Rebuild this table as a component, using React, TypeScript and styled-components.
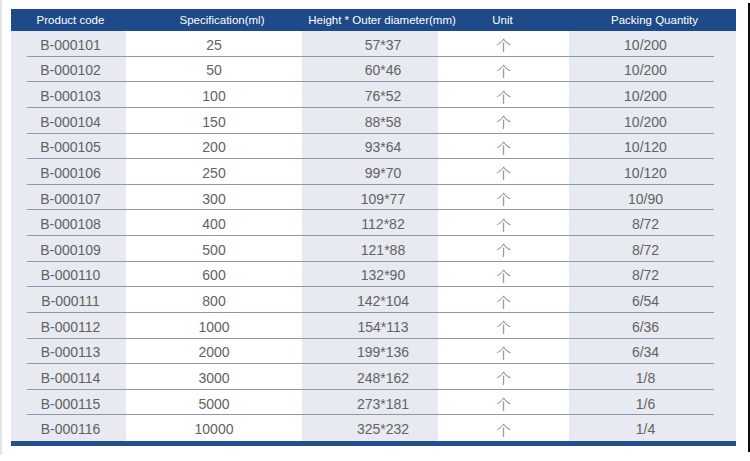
import React, { FunctionComponent } from "react";
import styled, { createGlobalStyle } from "styled-components";

const GlobalStyle = createGlobalStyle`
  html, body {
    margin: 0;
    padding: 0;
    background: #ffffff;
  }
  body {
    font-family: "Liberation Sans", Arial, "Noto Sans CJK SC", sans-serif;
  }
`;

// width, shaded stripe, and how far the text sits off the column centre
const columns = [
  { width: 115, shaded: true, head: 2, body: 2 },
  { width: 176, shaded: false, head: 8, body: 0 },
  { width: 136, shaded: true, head: 12, body: 13 },
  { width: 131, shaded: false, head: -1, body: 0 },
  { width: 167, shaded: true, head: 2, body: -7 },
];

const headers = [
  "Product code",
  "Specification(ml)",
  "Height * Outer diameter(mm)",
  "Unit",
  "Packing Quantity",
];

const rows = [
  ["B-000101", "25", "57*37", "10/200"],
  ["B-000102", "50", "60*46", "10/200"],
  ["B-000103", "100", "76*52", "10/200"],
  ["B-000104", "150", "88*58", "10/200"],
  ["B-000105", "200", "93*64", "10/120"],
  ["B-000106", "250", "99*70", "10/120"],
  ["B-000107", "300", "109*77", "10/90"],
  ["B-000108", "400", "112*82", "8/72"],
  ["B-000109", "500", "121*88", "8/72"],
  ["B-000110", "600", "132*90", "8/72"],
  ["B-000111", "800", "142*104", "6/54"],
  ["B-000112", "1000", "154*113", "6/36"],
  ["B-000113", "2000", "199*136", "6/34"],
  ["B-000114", "3000", "248*162", "1/8"],
  ["B-000115", "5000", "273*181", "1/6"],
  ["B-000116", "10000", "325*232", "1/4"],
];

const template = columns.map((c) => `${c.width}px`).join(" ");

const Frame = styled.div`
  display: flex;
  width: 750px;
  height: 461px;
  overflow: hidden;
`;

const LeftEdge = styled.div`
  width: 2px;
  margin: 0 0 6px 0;
  background: #e4e4e4;
`;

const Content = styled.div`
  flex: 1;
  padding: 9px 12px 0 9px;
`;

const RightEdge = styled.div`
  width: 2px;
  margin: 3px 0 9px 0;
  background: #0c0c0c;
`;

const Table = styled.div`
  width: 725px;
`;

const HeadRow = styled.div`
  display: grid;
  grid-template-columns: ${template};
  height: 22px;
  background: #1e4a89;
`;

const HeadCell = styled.div<{ $shift: number }>`
  display: flex;
  align-items: center;
  justify-content: center;
  padding-left: ${(p) => (p.$shift > 0 ? p.$shift * 2 : 0)}px;
  padding-right: ${(p) => (p.$shift < 0 ? -p.$shift * 2 : 0)}px;
  color: #ffffff;
  font-size: 11.5px;
  white-space: nowrap;
`;

const BodyRow = styled.div<{ $last: boolean }>`
  position: relative;
  display: grid;
  grid-template-columns: ${template};
  height: 25.625px;

  &::after {
    content: "";
    display: ${(p) => (p.$last ? "none" : "block")};
    position: absolute;
    left: 16px;
    right: 22px;
    bottom: 0;
    height: 1px;
    background: #8f98a9;
  }
`;

const Cell = styled.div<{ $shaded: boolean; $shift: number }>`
  display: flex;
  align-items: center;
  justify-content: center;
  padding-top: 2px;
  padding-left: ${(p) => (p.$shift > 0 ? p.$shift * 2 : 0)}px;
  padding-right: ${(p) => (p.$shift < 0 ? -p.$shift * 2 : 0)}px;
  background: ${(p) => (p.$shaded ? "#e7eaf1" : "#ffffff")};
  color: #626262;
  font-size: 14px;
  white-space: nowrap;
`;

const UnitMark = styled.span`
  font-family: "Noto Sans CJK SC", sans-serif;
  font-size: 15px;
  font-weight: 300;
  color: #666666;
`;

const BottomBar = styled.div`
  height: 5px;
  background: #224f8e;
`;

const App: FunctionComponent = () => {
  return (
    <>
      <GlobalStyle />
      <Frame>
        <LeftEdge />
        <Content>
          <Table>
            <HeadRow>
              {headers.map((h, i) => (
                <HeadCell key={h} $shift={columns[i].head}>
                  {h}
                </HeadCell>
              ))}
            </HeadRow>
            {rows.map((r, ri) => {
              const values = [r[0], r[1], r[2], null, r[3]];
              return (
                <BodyRow key={r[0]} $last={ri === rows.length - 1}>
                  {values.map((v, i) => (
                    <Cell
                      key={i}
                      $shaded={columns[i].shaded}
                      $shift={columns[i].body}
                    >
                      {v === null ? <UnitMark>个</UnitMark> : v}
                    </Cell>
                  ))}
                </BodyRow>
              );
            })}
            <BottomBar />
          </Table>
        </Content>
        <RightEdge />
      </Frame>
    </>
  );
};

export default App;
